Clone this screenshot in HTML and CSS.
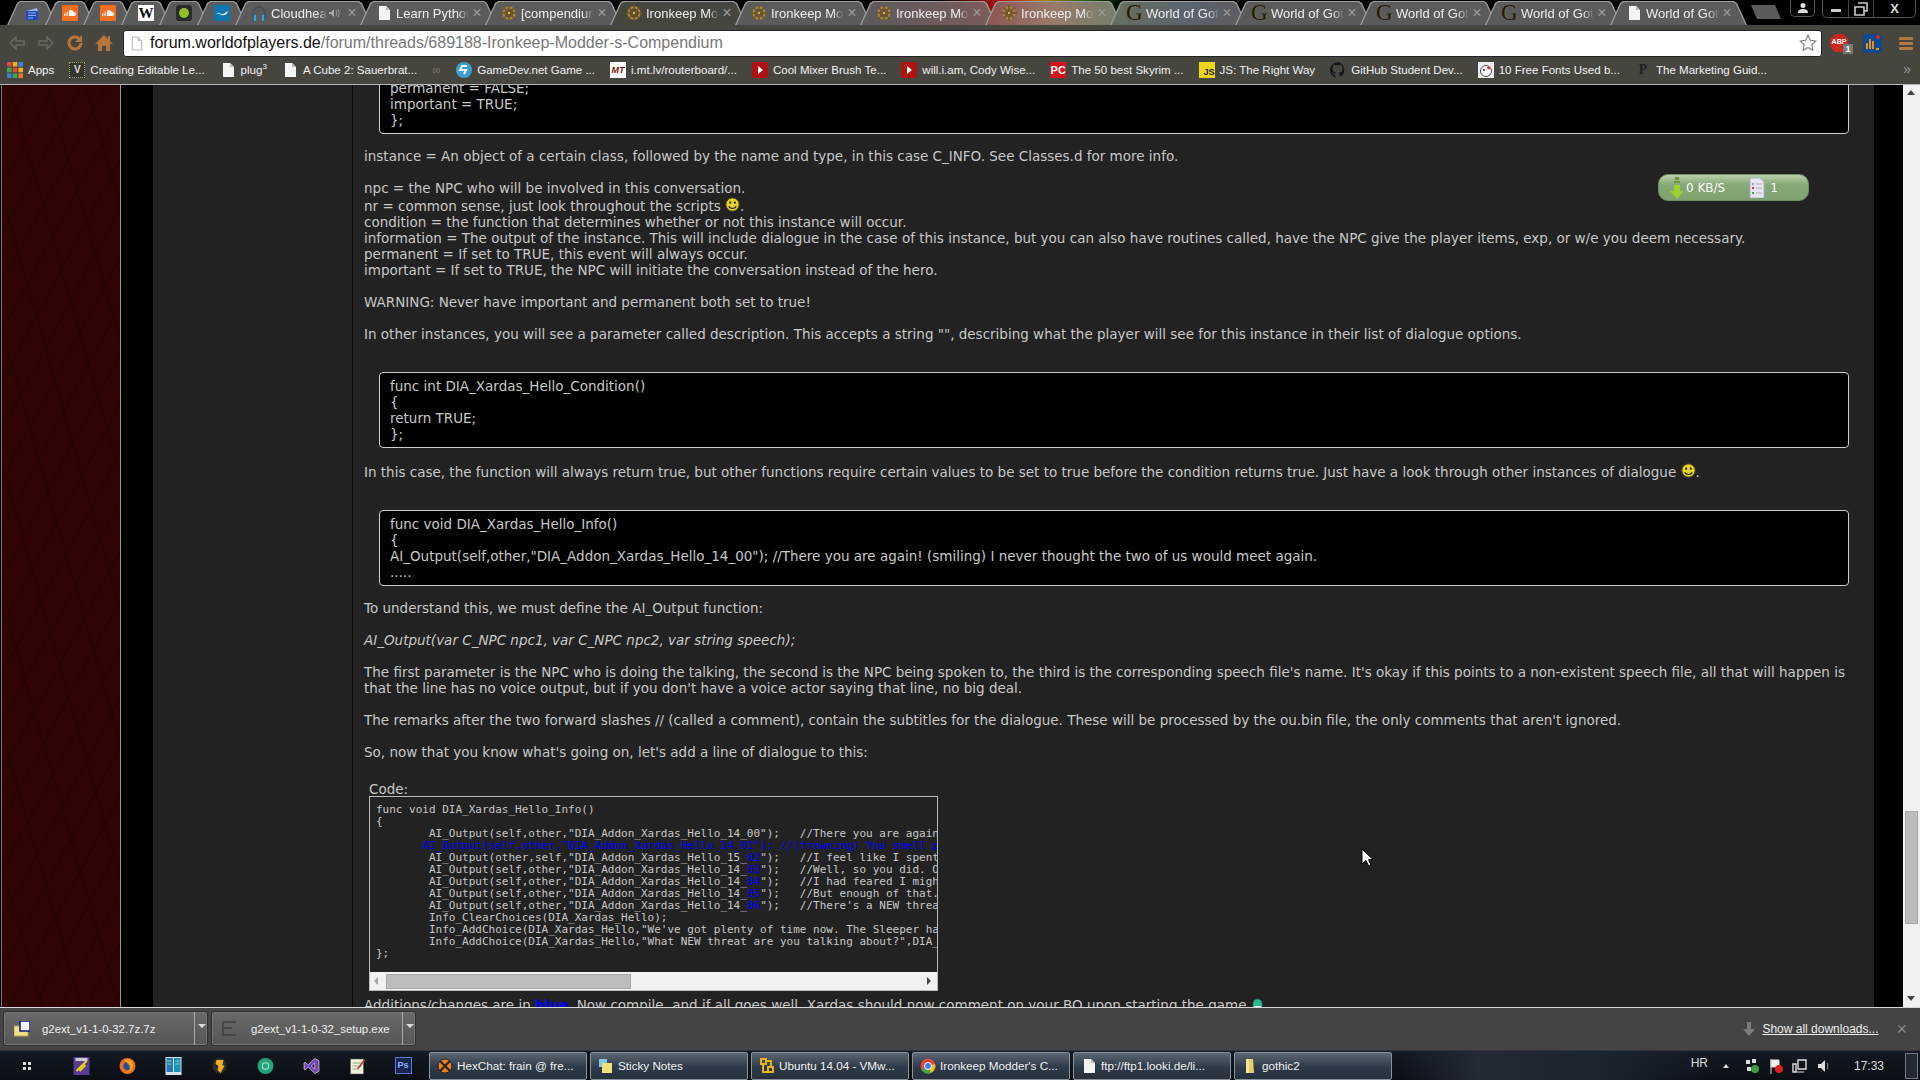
FILE: index.html
```html
<!DOCTYPE html>
<html lang="en">
<head>
<meta charset="utf-8">
<title>Ironkeep Modder's Compendium</title>
<link rel="stylesheet" href="styles.css">
</head>
<body>
<svg class="defs" width="0" height="0" aria-hidden="true">
  <symbol id="doc" viewBox="0 0 16 16"><path d="M3 1h7l4 4v10H3z" fill="#f4f4f4"/><path d="M10 1v4h4z" fill="#bbb"/></symbol>
  <symbol id="wheel" viewBox="0 0 16 16"><circle cx="8" cy="8" r="5.6" fill="none" stroke="#a8843c" stroke-width="2.2"/><circle cx="8" cy="8" r="2.2" fill="#3a2c12"/><path d="M8 0v16M0 8h16M2.5 2.5l11 11M13.5 2.5l-11 11" stroke="#6d5320" stroke-width="1.4"/><circle cx="8" cy="8" r="1.2" fill="#d9b45c"/></symbol>
  <symbol id="cloud" viewBox="0 0 16 16"><rect width="16" height="16" rx="1" fill="#f26f1f"/><path d="M2 11V8.500h.8V11zM3.700 11V7.500h.8V11zM5.400 11V6.500h.8V11zM7 11V5.500c2-1 4-.2 4.400 1.600 1.400-.3 2.600.6 2.600 1.900 0 1.200-1 2-2 2z" fill="#fff"/></symbol>
  <symbol id="yt" viewBox="0 0 16 16"><rect width="16" height="16" rx="2" fill="#b01111"/><path d="M6 4l5 4-5 4z" fill="#fff"/></symbol>
  <symbol id="smile" viewBox="0 0 16 16"><circle cx="8" cy="8" r="7" fill="#e8d22c" stroke="#5d5208"/><circle cx="5.500" cy="6" r="1.200" fill="#222"/><circle cx="10.500" cy="6" r="1.200" fill="#222"/><path d="M4 10c1.500 3 6.500 3 8 0" fill="none" stroke="#222" stroke-width="1.300"/></symbol>
  <symbol id="folder" viewBox="0 0 16 16"><path d="M4 1h7l1 14H4z" fill="#e8cd6a"/><path d="M4 1h3v14H4z" fill="#f6e596"/></symbol>
</svg>

<header class="tabstrip">
  <div class="tab pinned"><svg class="fav" viewBox="0 0 16 16"><path d="M2 6l11-3 1 3z" fill="#9fb6e6"/><rect x="2" y="6" width="12" height="9" fill="#2447b8"/><path d="M4 8h8M4 10.500h8M4 13h5" stroke="#8fb0ff"/></svg></div>
  <div class="tab pinned"><svg class="fav"><use href="#cloud"/></svg></div>
  <div class="tab pinned"><svg class="fav"><use href="#cloud"/></svg></div>
  <div class="tab pinned"><span class="fav wiki">W</span></div>
  <div class="tab pinned"><svg class="fav" viewBox="0 0 16 16"><rect width="16" height="16" rx="3" fill="#2b2b2b"/><circle cx="8" cy="8" r="5" fill="#8fc02a"/></svg></div>
  <div class="tab pinned"><svg class="fav" viewBox="0 0 16 16"><rect width="16" height="16" fill="#0e75ad"/><path d="M2 9c3-3 4 1 7 0s3-2 5-3c-1 3-3 5-6 4s-4-2-6-1z" fill="#fff"/></svg></div>
  <div class="tab"><svg class="fav" viewBox="0 0 16 16"><path d="M2 12V8a6 6 0 0 1 12 0v4" fill="none" stroke="#4a4f52" stroke-width="2"/><path d="M3 10h2v6H3zM11 10h2v6h-2z" fill="#2ba5dd"/></svg><span class="title">Cloudheart</span><svg class="audio" viewBox="0 0 12 12"><path d="M1 5h2l3-3v8L3 7H1z" fill="#aaa"/><path d="M8 3c1 2 1 4 0 6M10 2c1.500 2.500 1.500 5.500 0 8" fill="none" stroke="#999"/></svg><span class="close">×</span></div>
  <div class="tab"><svg class="fav"><use href="#doc"/></svg><span class="title">Learn Python the Hard</span><span class="close">×</span></div>
  <div class="tab"><svg class="fav"><use href="#wheel"/></svg><span class="title">[compendium] Ironkeep</span><span class="close">×</span></div>
  <div class="tab active"><svg class="fav"><use href="#wheel"/></svg><span class="title">Ironkeep Modder's</span><span class="close">×</span></div>
  <div class="tab"><svg class="fav"><use href="#wheel"/></svg><span class="title">Ironkeep Modder's</span><span class="close">×</span></div>
  <div class="tab tint-a"><svg class="fav"><use href="#wheel"/></svg><span class="title">Ironkeep Modder's</span><span class="close">×</span></div>
  <div class="tab tint-b"><svg class="fav"><use href="#wheel"/></svg><span class="title">Ironkeep Modder's</span><span class="close">×</span></div>
  <div class="tab tint-c"><span class="fav gothic">G</span><span class="title">World of Gothic</span><span class="close">×</span></div>
  <div class="tab"><span class="fav gothic">G</span><span class="title">World of Gothic</span><span class="close">×</span></div>
  <div class="tab"><span class="fav gothic">G</span><span class="title">World of Gothic</span><span class="close">×</span></div>
  <div class="tab"><span class="fav gothic">G</span><span class="title">World of Gothic</span><span class="close">×</span></div>
  <div class="tab"><svg class="fav"><use href="#doc"/></svg><span class="title">World of Gothic</span><span class="close">×</span></div>
  <div class="newtab"></div>
  <div class="wincontrols">
    <div class="winbtn user"><svg viewBox="0 0 12 12" width="12" height="12"><circle cx="6" cy="3.500" r="2.500" fill="#ddd"/><path d="M1 11c0-3 2-4 5-4s5 1 5 4z" fill="#ddd"/></svg></div>
    <div class="wingroup">
      <div class="winbtn"><span class="minbar"></span></div>
      <div class="winbtn"><svg viewBox="0 0 14 14" width="14" height="14"><path d="M4 1h9v8h-3M1 5h9v8H1z" fill="none" stroke="#ccc" stroke-width="1.600"/></svg></div>
      <div class="winbtn wide">X</div>
    </div>
  </div>
</header>

<div class="toolbar">
  <svg class="tool" viewBox="0 0 20 20"><path d="M9 4L3 10l6 6v-4h8V8H9z" fill="none" stroke="#6a6a62" stroke-width="1.500"/></svg>
  <svg class="tool" viewBox="0 0 20 20"><path d="M11 4l6 6-6 6v-4H3V8h8z" fill="none" stroke="#6a6a62" stroke-width="1.500"/></svg>
  <svg class="tool" viewBox="0 0 20 20"><path d="M16 10a6 6 0 1 1-2-4.500" fill="none" stroke="#b8743a" stroke-width="3"/><path d="M17 2v7h-7z" fill="#b8743a"/></svg>
  <svg class="tool" viewBox="0 0 20 20"><path d="M10 2L1 11h3v7h4v-5h4v5h4v-7h3l-3-3V3h-2v3z" fill="#b8743a"/></svg>
  <div class="omnibox">
    <svg class="pageicon" viewBox="0 0 14 16"><path d="M1.500.5h7l4 4v11h-11z" fill="#fff" stroke="#aaa"/><path d="M8.500.5v4h4" fill="#ddd" stroke="#aaa"/></svg>
    <span class="url"><span class="host">forum.worldofplayers.de</span>/forum/threads/689188-Ironkeep-Modder-s-Compendium</span>
    <svg class="star" viewBox="0 0 20 20"><path d="M10 1.500l2.600 5.500 6 .8-4.400 4.200 1.100 6L10 15.100 4.700 18l1.100-6L1.400 7.800l6-.8z" fill="#fff" stroke="#777" stroke-width="1.200"/></svg>
  </div>
  <div class="abp"><svg viewBox="0 0 18 18" width="18" height="18"><path d="M5 0h8l5 5v8l-5 5H5l-5-5V5z" fill="#c9281e"/></svg><span class="abptext">ABP</span><span class="abpcount">1</span></div>
  <svg class="chart" viewBox="0 0 19 19"><rect width="19" height="19" rx="3" fill="#0b4a8c"/><path d="M4 15V9M7 15V5M10 15V7M13 15h3" stroke="#f08c1a" stroke-width="2"/><circle cx="15" cy="3" r="2" fill="#e8202a"/></svg>
  <div class="menu"><span></span><span></span><span></span></div>
</div>

<nav class="bookmarks">
  <a class="bm"><svg class="bmi" viewBox="0 0 14 14"><path d="M0 0h4v4H0z" fill="#e04a3a"/><path d="M5 0h4v4H5z" fill="#f2b01e"/><path d="M10 0h4v4h-4z" fill="#3f7fe0"/><path d="M0 5h4v4H0z" fill="#3fa84a"/><path d="M5 5h4v4H5z" fill="#e04a3a"/><path d="M10 5h4v4h-4z" fill="#f2b01e"/><path d="M0 10h4v4H0z" fill="#3f7fe0"/><path d="M5 10h4v4H5z" fill="#3fa84a"/><path d="M10 10h4v4h-4z" fill="#e8782a"/></svg>Apps</a>
  <a class="bm"><span class="bmbox vee">V</span>Creating Editable Le...</a>
  <a class="bm"><svg class="bmi"><use href="#doc"/></svg><span>plug<sup>3</sup></span></a>
  <a class="bm"><svg class="bmi"><use href="#doc"/></svg>A Cube 2: Sauerbrat...</a>
  <a class="bm faint">∞</a>
  <a class="bm"><svg class="bmi" viewBox="0 0 16 16"><circle cx="8" cy="8" r="8" fill="#3f9ccf"/><path d="M11 4H6L4 8l3 0 3 0-2 4" fill="none" stroke="#fff" stroke-width="2"/></svg>GameDev.net Game ...</a>
  <a class="bm"><span class="bmbox mt">MT</span>i.mt.lv/routerboard/...</a>
  <a class="bm"><svg class="bmi"><use href="#yt"/></svg>Cool Mixer Brush Te...</a>
  <a class="bm"><svg class="bmi"><use href="#yt"/></svg>will.i.am, Cody Wise...</a>
  <a class="bm"><span class="bmbox pc">PC</span>The 50 best Skyrim ...</a>
  <a class="bm"><span class="bmbox js">JS</span>JS: The Right Way</a>
  <a class="bm"><svg class="bmi" viewBox="0 0 16 16"><path d="M8 0a8 8 0 0 0-2.500 15.600v-2.700c-2.200.5-2.700-1-2.700-1-.4-.9-.9-1.200-.9-1.200-.7-.5.100-.5.100-.5.800.1 1.200.8 1.200.8.700 1.200 1.900.9 2.300.7.100-.5.300-.9.500-1.100-1.800-.2-3.600-.9-3.600-3.900 0-.9.300-1.600.8-2.100-.1-.2-.4-1 .1-2.100 0 0 .7-.2 2.200.8a7.500 7.500 0 0 1 4 0c1.500-1 2.200-.8 2.200-.8.400 1.100.2 1.900.1 2.100.5.600.8 1.300.8 2.100 0 3.100-1.900 3.700-3.700 3.900.3.300.6.800.6 1.500v3A8 8 0 0 0 8 0z" fill="#151515"/></svg>GitHub Student Dev...</a>
  <a class="bm"><svg class="bmi" viewBox="0 0 16 16"><rect width="16" height="16" fill="#eee"/><circle cx="8" cy="9" r="5.500" fill="#fff" stroke="#444"/><circle cx="6" cy="8" r="1" fill="#222"/><circle cx="10.500" cy="6" r="1.500" fill="#d33"/></svg>10 Free Fonts Used b...</a>
  <a class="bm"><span class="bmbox pee">P</span>The Marketing Guid...</a>
  <span class="more">»</span>
</nav>

<main class="page">
  <div class="leftwall"></div>
  <div class="leftgap"></div>
  <aside class="userpane"></aside>
  <article class="post">
    <div class="codebox first">information = DIA_Xardas_Hello_Info;<br>permanent = FALSE;<br>important = TRUE;<br>};</div>
    <p class="para">instance = An object of a certain class, followed by the name and type, in this case C_INFO. See Classes.d for more info.<br><br>npc = the NPC who will be involved in this conversation.<br>nr = common sense, just look throughout the scripts <svg class="smiley"><use href="#smile"/></svg>.<br>condition = the function that determines whether or not this instance will occur.<br>information = The output of the instance. This will include dialogue in the case of this instance, but you can also have routines called, have the NPC give the player items, exp, or w/e you deem necessary.<br>permanent = If set to TRUE, this event will always occur.<br>important = If set to TRUE, the NPC will initiate the conversation instead of the hero.<br><br>WARNING: Never have important and permanent both set to true!<br><br>In other instances, you will see a parameter called description. This accepts a string "", describing what the player will see for this instance in their list of dialogue options.</p>
    <div class="codebox">func int DIA_Xardas_Hello_Condition()<br>{<br>return TRUE;<br>};</div>
    <p class="para">In this case, the function will always return true, but other functions require certain values to be set to true before the condition returns true. Just have a look through other instances of dialogue <svg class="smiley"><use href="#smile"/></svg>.</p>
    <div class="codebox">func void DIA_Xardas_Hello_Info()<br>{<br>AI_Output(self,other,"DIA_Addon_Xardas_Hello_14_00"); //There you are again! (smiling) I never thought the two of us would meet again.<br>.....</div>
    <p class="para">To understand this, we must define the AI_Output function:<br><br><em>AI_Output(var C_NPC npc1, var C_NPC npc2, var string speech);</em><br><br>The first parameter is the NPC who is doing the talking, the second is the NPC being spoken to, the third is the corresponding speech file's name. It's okay if this points to a non-existent speech file, all that will happen is<br>that the line has no voice output, but if you don't have a voice actor saying that line, no big deal.<br><br>The remarks after the two forward slashes // (called a comment), contain the subtitles for the dialogue. These will be processed by the ou.bin file, the only comments that aren't ignored.<br><br>So, now that you know what's going on, let's add a line of dialogue to this:</p>
    <div class="codeblock">
      <div class="codelabel">Code:</div>
      <div class="codeframe">
        <pre class="codepre">func void DIA_Xardas_Hello_Info()
{
	AI_Output(self,other,"DIA_Addon_Xardas_Hello_14_00");   //There you are again! (smiling) I never thought the two of us
<span class="add">       AI_Output(self,other,"DIA_Addon_Xardas_Hello_14_01"); //(frowning) You smell powerful magic here</span>
	AI_Output(other,self,"DIA_Addon_Xardas_Hello_15_<span class="add">02</span>");   //I feel like I spent weeks under a pile of rocks.
	AI_Output(self,other,"DIA_Addon_Xardas_Hello_14_<span class="add">03</span>");   //Well, so you did. Only the magic kept you alive.
	AI_Output(self,other,"DIA_Addon_Xardas_Hello_14_<span class="add">04</span>");   //I had feared I might have lost you.
	AI_Output(self,other,"DIA_Addon_Xardas_Hello_14_<span class="add">05</span>");   //But enough of that. You are here now.
	AI_Output(self,other,"DIA_Addon_Xardas_Hello_14_<span class="add">06</span>");   //There's a NEW threat we must face.
	Info_ClearChoices(DIA_Xardas_Hello);
	Info_AddChoice(DIA_Xardas_Hello,"We've got plenty of time now. The Sleeper has been banished",DIA_Xardas_Hello_Plenty);
	Info_AddChoice(DIA_Xardas_Hello,"What NEW threat are you talking about?",DIA_Xardas_Hello_Threat);
};</pre>
        <div class="hscroll"><span class="arrow-l"></span><span class="hthumb"></span><span class="arrow-r"></span></div>
      </div>
    </div>
    <p class="para last">Additions/changes are in <a class="bluelink">blue</a>. Now compile, and if all goes well, Xardas should now comment on your BO upon starting the game <svg class="smiley teal" viewBox="0 0 16 16"><path d="M2 15V7a6 6 0 0 1 12 0v8z" fill="#2fb58f" stroke="#134"/><path d="M4 10h8v4H4z" fill="#fff"/></svg></p>
  </article>
  <div class="rightgap"></div>
  <div class="vscroll"><span class="arrow-u"></span><span class="vthumb"></span><span class="arrow-d"></span></div>

  <div class="speedbadge">
    <svg class="dlarrow" viewBox="0 0 16 22"><path d="M6 0h4v3H6zM5 4h6v2H5z" fill="#6d9a2a"/><path d="M5 8h6v6h4l-7 8-7-8h4z" fill="#9ed02e"/></svg>
    <span class="speedtext">0 KB/S</span>
    <svg class="listicon" viewBox="0 0 16 20"><path d="M1 0h10l4 4v16H1z" fill="#e8e6f4" stroke="#a9a3cc" stroke-width=".8"/><path d="M3 5h2v2H3z" fill="#aaa"/><path d="M3 9h2v2H3z" fill="#d33"/><path d="M3 14h2v2H3z" fill="#3a3"/><path d="M7 6h6M7 10h6M7 15h6" stroke="#aaa"/></svg>
    <span class="speedtext">1</span>
  </div>
  <svg class="cursor" viewBox="0 0 12 19"><path d="M1 1v15l4-3.500 2.500 5.500 2.500-1-2.500-5.500H12z" fill="#fff" stroke="#000"/></svg>
</main>

<footer class="downloads">
  <div class="dlitem"><div class="dlmain"><svg class="dlicon" viewBox="0 0 16 16"><path d="M0 5h14v10H0z" fill="#efe08a" stroke="#b9a54c"/><rect x="6" y="0" width="10" height="10" fill="#fff" stroke="#11118a" stroke-width="1.500"/></svg><span class="dlname">g2ext_v1-1-0-32.7z.7z</span></div><div class="dlcaret"></div></div>
  <div class="dlitem"><div class="dlmain"><svg class="dlicon" viewBox="0 0 16 16"><path d="M1 1h13M1 1v13h13M1 7h9" fill="none" stroke="#3e3e3e" stroke-width="1.400"/></svg><span class="dlname">g2ext_v1-1-0-32_setup.exe</span></div><div class="dlcaret"></div></div>
  <div class="dlright">
    <svg class="showarrow" viewBox="0 0 12 14"><path d="M4 0h4v7h4l-6 7-6-7h4z" fill="#7b7b7b"/></svg>
    <a class="showall">Show all downloads...</a>
    <span class="dlclose">×</span>
  </div>
</footer>

<div class="taskbar">
  <div class="startdots"><span></span><span></span><span></span><span></span></div>
  <div class="launch">
    <div class="li"><svg viewBox="0 0 16 18"><rect width="16" height="18" fill="#5a3d92"/><path d="M3 14L13 4M6 14l6-6" stroke="#e6d21c" stroke-width="2"/><rect x="2" y="1" width="12" height="3" fill="#ccc"/></svg></div>
    <div class="li"><svg viewBox="0 0 16 16"><circle cx="8" cy="8" r="7.500" fill="#e8701f"/><circle cx="8" cy="8" r="4" fill="#2d4d9c"/><path d="M5 2c6-2 9 3 8 7-1 4-5 6-8 5 3 0 6-2 5-6-.5-2-3-3-5-6z" fill="#f4a21c"/></svg></div>
    <div class="li"><svg viewBox="0 0 16 18"><rect width="16" height="18" fill="#d8e2ea"/><path d="M1 1h6.500v14H1z" fill="#2576b8"/><path d="M8.500 1H15v14H8.500z" fill="#1f8fb0"/><path d="M2 4h4M2 7h4M10 4h4M10 7h4" stroke="#7fe0b0"/></svg></div>
    <div class="li"><svg viewBox="0 0 16 18"><path d="M8 1c5 0 7 4 7 8s-3 8-7 8-7-4-7-8 2-8 7-8z" fill="#2a2a2a"/><path d="M5 3h7l-1 5 2 1-4 7-3-3 1-4-3-2z" fill="#f5ad1f"/></svg></div>
    <div class="li"><svg viewBox="0 0 16 16"><circle cx="8" cy="8" r="7.500" fill="#28a27c"/><circle cx="8" cy="8" r="3" fill="none" stroke="#a9e8cc"/></svg></div>
    <div class="li"><svg viewBox="0 0 16 16"><path d="M11 1l4 2v10l-4 2-6-6-3 2.500-1-.5V5l1-.5L5 7zM11 5L8 8l3 3z" fill="#7b3fb8" stroke="#eee" stroke-width=".6"/></svg></div>
    <div class="li"><svg viewBox="0 0 16 18"><rect x="1" y="2" width="13" height="15" fill="#f5f2dc" stroke="#555" stroke-width=".6"/><path d="M3 6h9M3 9h9M3 12h6" stroke="#8a8"/><path d="M8 12l7-9" stroke="#c33" stroke-width="1.600"/></svg></div>
    <div class="li"><span class="ps">Ps</span></div>
  </div>
  <div class="tasks">
    <div class="task"><svg class="ti" viewBox="0 0 16 16"><circle cx="8" cy="8" r="7" fill="#e8801f" stroke="#222"/><path d="M3 3l10 10M13 3L3 13" stroke="#222" stroke-width="2"/></svg><span>HexChat: frain @ fre...</span></div>
    <div class="task"><svg class="ti" viewBox="0 0 16 16"><rect x="1" y="1" width="8" height="8" fill="#7fc8e8"/><rect x="4" y="5" width="10" height="10" fill="#f0e27a"/></svg><span>Sticky Notes</span></div>
    <div class="task"><svg class="ti" viewBox="0 0 16 16"><path d="M2 1h5v5H2zM9 9h5v5H9zM4 6v8h5M7 3h5v6" fill="none" stroke="#e3b516" stroke-width="2"/></svg><span>Ubuntu 14.04 - VMw...</span></div>
    <div class="task"><svg class="ti" viewBox="0 0 16 16"><circle cx="8" cy="8" r="7.500" fill="#e04a3a"/><path d="M8 8L1.500 12A7.500 7.500 0 0 0 11 15z" fill="#3fa84a"/><path d="M8 8l7 -2A7.500 7.500 0 0 1 11 15z" fill="#f2c01e"/><circle cx="8" cy="8" r="3.500" fill="#3f7fe0" stroke="#fff"/></svg><span>Ironkeep Modder's C...</span></div>
    <div class="task"><svg class="ti"><use href="#doc"/></svg><span>ftp://ftp1.looki.de/li...</span></div>
    <div class="task"><svg class="ti"><use href="#folder"/></svg><span>gothic2</span></div>
  </div>
  <div class="tray">
    <span class="lang">HR</span>
    <span class="trayup"></span>
    <svg class="trayi" viewBox="0 0 16 16"><path d="M2 2h4v4H2zM8 1h4v4H8zM3 9h4v4H3z" fill="#ddd"/><circle cx="11" cy="11" r="4" fill="#3a9c3a"/></svg>
    <svg class="trayi" viewBox="0 0 16 16"><path d="M3 1v15M3 2h8v7H3z" stroke="#ddd" fill="#eee"/><circle cx="11" cy="11" r="4" fill="#d22"/></svg>
    <svg class="trayi" viewBox="0 0 16 16"><path d="M1 6h3v8H1zM6 2h8v9H6z" fill="none" stroke="#ddd" stroke-width="1.400"/><path d="M4 14h8" stroke="#ddd"/></svg>
    <svg class="trayi" viewBox="0 0 16 16"><path d="M2 6h3l4-4v12l-4-4H2z" fill="#ddd"/><path d="M11 5c1 2 1 4 0 6" stroke="#999" fill="none"/></svg>
    <span class="clock">17:33</span>
    <span class="showdesktop"></span>
  </div>
</div>
</body>
</html>
```

FILE: styles.css
```css
* { box-sizing: border-box; }
html, body { margin: 0; padding: 0; }
body {
  width: 1920px;
  height: 1080px;
  overflow: hidden;
  display: flex;
  flex-direction: column;
  background: #000;
  font-family: "Liberation Sans", Arial, sans-serif;
  color: #eee;
}
.defs { position: absolute; }

/* Tab strip */
.tabstrip {
  height: 25px;
  flex: none;
  display: flex;
  align-items: flex-end;
  padding: 0 8px 0 7px;
  background:
    linear-gradient(90deg, transparent 935px, #b01010 1000px, #b08010 1045px, #206010 1085px, transparent 1125px),
    #000;
}
.tab {
  position: relative;
  width: 137px;
  height: 24px;
  margin-right: -12px;
  padding: 0 14px 0 16px;
  display: flex;
  align-items: center;
  flex: none;
  font-size: 13px;
  color: #eee;
  background: #9a9a9a;
  clip-path: polygon(0 100%, 10px 2px, 13px 0, calc(100% - 13px) 0, calc(100% - 10px) 2px, 100% 100%);
}
.tab::before {
  content: "";
  position: absolute;
  inset: 0;
  background: #5b5b5b;
  clip-path: polygon(1.5px 100%, 11px 3px, 14px 1px, calc(100% - 14px) 1px, calc(100% - 11px) 3px, calc(100% - 1.5px) 100%);
}
.tab > * { position: relative; }
.tab.pinned { width: 50px; padding: 0; justify-content: center; }
.tab.active::before { background: #46463f; }
.tab.tint-a::before { background: linear-gradient(90deg, #5b5b5b, #7c5b5b); }
.tab.tint-b::before { background: linear-gradient(100deg, #8a5454, #9a7a6a 50%, #6f806a); }
.tab.tint-c::before { background: linear-gradient(90deg, #66705f, #5b6370 60%, #5b5b5b); }
.fav { width: 16px; height: 16px; flex: none; display: block; }
.wiki { background: #fff; color: #111; font: bold 15px/16px "Liberation Serif", serif; text-align: center; }
.gothic { color: #211c12; font: 23px/16px "Liberation Serif", serif; text-align: center; text-shadow: 1px 0 0 #7a6530; }
.title {
  flex: 1;
  min-width: 0;
  margin-left: 4px;
  white-space: nowrap;
  overflow: hidden;
  -webkit-mask-image: linear-gradient(90deg, #000 85%, transparent);
  mask-image: linear-gradient(90deg, #000 85%, transparent);
}
.audio { width: 12px; height: 12px; flex: none; margin-left: 1px; margin-right: 4px; }
.close { width: 12px; flex: none; margin-left: 2px; text-align: center; color: #9a9a9a; font-size: 16px; line-height: 16px; }
.newtab {
  width: 30px;
  height: 14px;
  margin: 0 0 6px 16px;
  flex: none;
  background: #5b5b5b;
  clip-path: polygon(6px 100%, 0 0, 24px 0, 100% 100%);
}
.wincontrols { margin-left: auto; align-self: flex-start; display: flex; gap: 7px; margin-right: -4px; }
.winbtn {
  width: 25px;
  height: 17px;
  display: flex;
  align-items: center;
  justify-content: center;
  color: #ddd;
  font: bold 13px "Liberation Sans", sans-serif;
}
.winbtn.user, .wingroup { border: 1px solid #555; border-top: 0; border-radius: 0 0 5px 5px; }
.wingroup { display: flex; }
.wingroup .winbtn + .winbtn { border-left: 1px solid #444; }
.winbtn.wide { width: 42px; }
.minbar { width: 10px; height: 3px; background: #ccc; margin-top: 4px; }

/* Toolbar */
.toolbar {
  height: 32px;
  flex: none;
  display: flex;
  align-items: center;
  padding: 4px 0 0 7px;
  background: #46463f;
}
.tool { width: 20px; height: 20px; flex: none; margin-right: 9px; }
.omnibox {
  width: 1699px;
  height: 27px;
  padding: 0 4px 0 7px;
  display: flex;
  align-items: center;
  background: #fff;
  border: 1px solid #222;
  border-radius: 3px;
  font-size: 16px;
  color: #777;
}
.pageicon { width: 12px; height: 15px; flex: none; margin-right: 7px; }
.url { flex: 1; white-space: nowrap; }
.host { color: #111; }
.star { width: 18px; height: 18px; flex: none; }
.abp { position: relative; width: 18px; height: 18px; margin-left: 8px; flex: none; }
.abp svg { display: block; }
.abptext { position: absolute; inset: 4px 0 0; text-align: center; font: bold 7px "Liberation Sans", sans-serif; color: #fff; }
.abpcount { position: absolute; left: 13px; top: 10px; width: 10px; height: 10px; background: #777; font: bold 9px/10px "Liberation Sans", sans-serif; text-align: center; color: #fff; }
.chart { width: 19px; height: 19px; margin-left: 15px; flex: none; }
.menu { width: 14px; margin-left: 17px; display: flex; flex-direction: column; gap: 2px; flex: none; }
.menu span { height: 3px; background: #b07a45; border-radius: 1px; }

/* Bookmarks */
.bookmarks {
  height: 28px;
  flex: none;
  position: relative;
  display: flex;
  align-items: center;
  gap: 15px;
  padding: 0 0 2px 7px;
  background: #46463f;
  border-bottom: 1px solid #b5b5b5;
  font-size: 11.55px;
  color: #f2f2f2;
}
.bm { display: flex; align-items: center; gap: 5px; white-space: nowrap; }
.bm sup { font-size: 8px; line-height: 6px; }
.bmi { width: 16px; height: 16px; flex: none; }
.bmbox { width: 16px; height: 16px; display: block; flex: none; text-align: center; font: bold 10px/16px "Liberation Sans", sans-serif; }
.vee { background: #34352b; border: 1px dotted #8fa86a; color: #ddd; line-height: 13px; }
.mt { background: #fff; color: #7a1212; font-style: italic; font-size: 9px; }
.pc { background: #d4141c; color: #fff; font-size: 11px; }
.js { background: #f0d41a; color: #222; font-size: 9px; line-height: 20px; text-align: right; }
.pee { color: #222; font: bold 14px/16px "Liberation Serif", serif; }
.faint { width: 9px; color: #777; }
.more { position: absolute; right: 9px; top: 4px; color: #999; font-size: 14px; }

/* Page */
.page {
  position: relative;
  flex: none;
  height: 922px;
  display: flex;
  overflow: hidden;
  background: #000;
}
.leftwall {
  width: 120px;
  flex: none;
  border-left: 1px solid #777;
  border-right: 1px solid #999;
  margin-left: 1px;
  background:
    repeating-linear-gradient(118deg, rgba(0,0,0,.13) 0 2px, transparent 2px 23px),
    repeating-linear-gradient(74deg, rgba(0,0,0,.10) 0 3px, transparent 3px 37px),
    repeating-linear-gradient(90deg, rgba(0,0,0,.10) 0 1px, transparent 1px 4px),
    #320404;
}
.leftgap { width: 32px; flex: none; background: #000; }
.userpane { width: 200px; flex: none; background: #222; border-right: 1px solid #0a0a0a; }
.post {
  width: 1521px;
  flex: none;
  background: #222;
  padding: 0 0 0 11px;
  font: 13.5px/16px "DejaVu Sans", Verdana, sans-serif;
  color: #c8c8c8;
}
.para { margin: 0; white-space: nowrap; }
.para.last { margin-top: 6px; }
.codebox {
  width: 1470px;
  margin: 30px 0 14px 15px;
  padding: 5px 10px;
  background: #000;
  border: 1px solid #ccc;
  border-radius: 4px;
}
.codebox.first { margin: -27px 0 14px 15px; }
.smiley { width: 15px; height: 17px; vertical-align: -2px; }
.teal { width: 13px; height: 15px; }
em { font-style: italic; }
.codeblock { margin: 21px 0 0 5px; width: 569px; }
.codelabel { height: 15px; }
.codeframe { border: 1px solid #bbb; height: 195px; display: flex; flex-direction: column; background: #222; }
.codepre {
  flex: 1;
  margin: 0;
  padding: 7px 0 0 6px;
  overflow: hidden;
  font: 11px/12px "DejaVu Sans Mono", "Liberation Mono", monospace;
  color: #c8c8c8;
  tab-size: 8;
  white-space: pre;
}
.add { color: #00f; }
.hscroll {
  height: 18px;
  flex: none;
  background: #f1f1f1;
  display: flex;
  align-items: center;
  padding: 0 6px 0 4px;
}
.arrow-l { width: 0; height: 0; border: 4px solid transparent; border-right-color: #a3a3a3; border-left: 0; margin-right: 8px; }
.hthumb { width: 245px; height: 15px; background: #bcbcbc; border: 1px solid #a8a8a8; }
.arrow-r { width: 0; height: 0; border: 4px solid transparent; border-left-color: #444; border-right: 0; margin-left: auto; }
.bluelink { color: #00f; font-weight: bold; }
.rightgap { width: 29px; flex: none; background: #000; }
.vscroll { flex: 1; background: #f1f1f1; position: relative; }
.arrow-u, .arrow-d { position: absolute; left: 4px; width: 0; height: 0; border-left: 4px solid transparent; border-right: 4px solid transparent; }
.arrow-u { top: 5px; border-bottom: 5px solid #444; }
.arrow-d { bottom: 6px; border-top: 5px solid #444; }
.vthumb { position: absolute; left: 2px; top: 726px; width: 13px; height: 113px; background: #bcbcbc; border: 1px solid #a8a8a8; }

/* Overlays */
.speedbadge {
  position: absolute;
  left: 1658px;
  top: 89px;
  width: 151px;
  height: 27px;
  padding-left: 10px;
  display: flex;
  align-items: center;
  border-radius: 10px;
  border: 1px solid #6f8f64;
  background: linear-gradient(#b8d0aa, #86a877 40%, #7fa270);
  color: #fff;
  font: 12px "DejaVu Sans", sans-serif;
}
.dlarrow { width: 16px; height: 22px; flex: none; margin-right: 1px; }
.speedtext { white-space: nowrap; }
.listicon { width: 16px; height: 20px; flex: none; margin: 0 5px 0 24px; }
.cursor { position: absolute; left: 1361px; top: 763px; width: 12px; height: 19px; }

/* Downloads */
.downloads {
  height: 43px;
  flex: none;
  display: flex;
  align-items: flex-start;
  gap: 3px;
  padding: 3px 0 0 3px;
  background: #444;
  border-top: 1px solid #d8d8d8;
}
.dlitem {
  width: 205px;
  height: 35px;
  display: flex;
  border: 1px solid #2f2f2f;
  border-radius: 3px;
  background: linear-gradient(#696969, #565656);
  box-shadow: inset 0 0 0 1px #777;
}
.dlmain { width: 191px; display: flex; align-items: center; padding-left: 10px; border-right: 1px solid #aaa; }
.dlicon { width: 16px; height: 16px; flex: none; margin-right: 12px; }
.dlname { font-size: 11.4px; color: #f0f0f0; white-space: nowrap; }
.dlitem + .dlitem .dlicon { margin-right: 13px; }
.dlcaret { flex: 1; position: relative; }
.dlcaret::after { content: ""; position: absolute; left: 3px; top: 12px; border: 4px solid transparent; border-top: 4px solid #ddd; border-bottom: 0; }
.dlright { margin-left: auto; height: 36px; display: flex; align-items: center; padding-right: 13px; }
.showarrow { width: 12px; height: 14px; flex: none; margin-right: 7px; }
.showall { font-size: 12px; color: #eee; text-decoration: underline; margin-right: 18px; }
.dlclose { color: #888; font-size: 18px; line-height: 16px; }

/* Taskbar */
.taskbar {
  height: 30px;
  flex: none;
  display: flex;
  align-items: center;
  background:
    linear-gradient(90deg, transparent 1400px, #242a36 1480px, #1c2430 1600px, transparent 1720px),
    linear-gradient(#141a22, #0a0e14);
  border-top: 1px solid #2e3640;
}
.startdots { width: 58px; flex: none; display: grid; grid-template-columns: 3px 3px; gap: 2px; justify-content: center; margin-left: -2px; margin-right: 2px; }
.startdots span { height: 3px; background: #ddd; }
.launch { display: flex; flex: none; width: 371px; }
.li { width: 46px; height: 28px; flex: none; display: flex; align-items: center; justify-content: center; }
.li svg { width: 17px; height: 18px; }
.ps { width: 17px; height: 17px; background: #1a2350; border: 1px solid #5a78d8; color: #8fb0ff; font: bold 9px/15px "Liberation Sans", sans-serif; text-align: center; }
.tasks { display: flex; gap: 3px; flex: none; }
.task {
  width: 158px;
  height: 28px;
  display: flex;
  align-items: center;
  gap: 4px;
  padding-left: 7px;
  border: 1px solid #8a929c;
  border-radius: 2px;
  background: linear-gradient(#5c6672, #2e3a48 55%, #26313d);
  color: #f2f2f2;
  font-size: 11.7px;
  white-space: nowrap;
}
.ti { width: 16px; height: 16px; flex: none; }
.tray { margin-left: auto; position: relative; height: 28px; display: flex; align-items: center; font-size: 12px; color: #ddd; }
.lang { margin-right: 15px; margin-top: -6px; }
.trayup { width: 0; height: 0; border-left: 3px solid transparent; border-right: 3px solid transparent; border-bottom: 4px solid #ddd; margin-right: 15px; }
.trayi { width: 16px; height: 16px; flex: none; margin-right: 8px; }
.clock { margin: 0 21px 0 14px; }
.showdesktop { width: 13px; height: 26px; border: 1px solid #778; background: #232a36; margin-right: 2px; }
```
